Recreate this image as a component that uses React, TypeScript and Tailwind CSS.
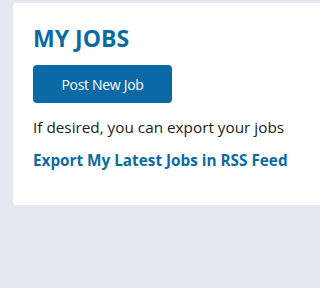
export default function App() {
  return (
    <div className="h-[288px] w-full overflow-hidden bg-[#e4e9f1] pt-[3px] pl-[13px] font-['Open_Sans',sans-serif]">
      <div className="w-[340px] rounded-[4px] bg-white pl-5 pt-5 pb-[33px]">
        <h1 className="text-[23px] font-bold leading-[30px] text-[#0b6aa2]">MY JOBS</h1>
        <button className="mt-3 flex h-[38px] w-[139px] items-center justify-center rounded-[4px] bg-[#0b6aa5] text-[14px] tracking-[-0.3px] text-white">
          Post New Job
        </button>
        <p className="mt-3 text-[15.3px] leading-6 whitespace-nowrap text-[#1c1c1c]">
          If desired, you can export your jobs
        </p>
        <a className="mt-[9px] block text-[15.3px] font-bold leading-6 whitespace-nowrap text-[#0b6aa2]" href="#">
          Export My Latest Jobs in RSS Feed
        </a>
      </div>
    </div>
  );
}
